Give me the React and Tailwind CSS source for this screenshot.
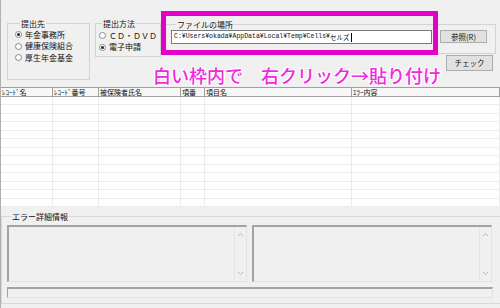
import React from "react";

function Radio({ checked, label }) {
  return (
    <div className="flex items-center h-[11.5px] gap-[3px]">
      <span className="w-[7px] h-[7px] rounded-full border border-[#8a8a8a] bg-white flex items-center justify-center shrink-0">
        {checked && <span className="w-[3px] h-[3px] rounded-full bg-[#222]" />}
      </span>
      <span className="whitespace-nowrap">{label}</span>
    </div>
  );
}

function Chevron({ up }) {
  return (
    <svg width="7" height="5" viewBox="0 0 7 5" className="block">
      <path
        d={up ? "M1 4 L3.5 1.5 L6 4" : "M1 1 L3.5 3.5 L6 1"}
        fill="none"
        stroke="#b8b8b8"
        strokeWidth="1"
      />
    </svg>
  );
}

function TextArea() {
  return (
    <div className="w-[240px] h-[57px] bg-[#f0f0f0] border-t-2 border-l-2 border-[#a3a3a3] border-r border-b border-r-[#e2e2e2] border-b-[#e2e2e2] flex justify-end">
      <div className="w-[12px] h-full border-l border-[#e6e6e6] flex flex-col items-center justify-between py-[5px]">
        <Chevron up />
        <Chevron />
      </div>
    </div>
  );
}

const cols = [
  { w: "w-[52px]", t: "ﾚｺｰﾄﾞ名" },
  { w: "w-[46px]", t: "ﾚｺｰﾄﾞ番号" },
  { w: "w-[82px]", t: "被保険者氏名" },
  { w: "w-[24px]", t: "項番" },
  { w: "w-[147px]", t: "項目名" },
  { w: "flex-1", t: "ｴﾗｰ内容" },
];

export default function App() {
  const rows = Array.from({ length: 13 });
  return (
    <div className="w-[500px] h-[308px] bg-[#f0f0f0] border-l border-[#b0b0b0] relative overflow-hidden text-[8px] leading-[10px] text-[#111] font-['Noto_Sans_CJK_JP','Noto_Sans',sans-serif]">
      {/* top controls */}
      <div className="flex items-start h-[87px] pl-[6px] pt-[19px]">
        <fieldset className="w-[83px] h-[61px] border border-[#d3d3d3] pl-[7px]">
          <legend className="ml-[5px] px-[1px] leading-[9px]">提出先</legend>
          <div className="flex flex-col pt-[1px]">
            <Radio checked label="年金事務所" />
            <Radio label="健康保険組合" />
            <Radio label="厚生年金基金" />
          </div>
        </fieldset>
        <fieldset className="ml-[5px] w-[66px] h-[38px] border border-[#d3d3d3] pl-[3px]">
          <legend className="ml-[3px] px-[1px] leading-[9px]">提出方法</legend>
          <div className="flex flex-col pt-[2px]">
            <Radio label="ＣＤ・ＤＶＤ" />
            <Radio checked label="電子申請" />
          </div>
        </fieldset>
        <div className="ml-[4px] mt-[1px] flex flex-col">
          <fieldset className="w-[331px] h-[34px] border border-[#d3d3d3] pl-[5px]">
            <legend className="ml-[5px] px-[1px] leading-[9px]">ファイルの場所</legend>
            <div className="flex items-start mt-[1px]">
              <div className="w-[261px] h-[14px] bg-white border border-[#7a7a7a] flex items-center pl-[2px] text-[6.5px] leading-[8px] font-['Liberation_Mono','Noto_Sans_CJK_JP',monospace] whitespace-nowrap">
                <span>C:¥Users¥okada¥AppData¥Local¥Temp¥Cells¥</span>
                <span className="font-['Noto_Sans_CJK_JP',sans-serif]">セルズ</span>
                <span className="w-[1px] h-[9px] bg-black ml-[1px]" />
              </div>
              <button className="ml-[8px] w-[47px] h-[13px] bg-[#e1e1e1] border border-[#adadad] text-[7.5px] leading-[11px] flex items-center justify-center">
                参照(R)
              </button>
            </div>
          </fieldset>
          <button className="ml-[281px] mt-[1px] w-[47px] h-[16px] bg-[#e1e1e1] border border-[#adadad] text-[7.5px] leading-[14px] flex items-center justify-center">
            チェック
          </button>
        </div>
      </div>

      {/* grid */}
      <div className="flex flex-col">
        <div className="flex h-[10px] bg-[#f7f7f7] border-t border-b border-[#a0a0a0] text-[7px] leading-[8px]">
          {cols.map((c, i) => (
            <div key={i} className={`${c.w} border-r border-[#a0a0a0] pl-[1px] whitespace-nowrap overflow-hidden`}>
              {c.t}
            </div>
          ))}
        </div>
        <div className="h-[110px] bg-white flex flex-col">
          {rows.map((_, r) => (
            <div key={r} className="flex-1 flex border-b border-[#ececec]">
              {cols.map((c, i) => (
                <div key={i} className={`${c.w} border-r border-[#ececec]`} />
              ))}
            </div>
          ))}
        </div>
      </div>

      {/* error details */}
      <fieldset className="mt-[5px] w-[510px] h-[92px] border border-[#d8d8d8] pl-[5px]">
        <legend className="ml-[4px] px-[1px] leading-[9px]">エラー詳細情報</legend>
        <div className="flex gap-[5px] mt-[4px]">
          <TextArea />
          <TextArea />
        </div>
        <div className="mt-[5px] w-[486px] h-[11px] bg-[#f0f0f0] border-t-2 border-l border-[#a3a3a3] border-r border-b border-r-[#e2e2e2] border-b-[#e2e2e2]" />
      </fieldset>

      {/* annotation overlay */}
      <div className="absolute left-[160px] top-[11px] w-[277px] h-[44px] border-[5px] border-[#e400c8] pointer-events-none" />
      <div className="absolute left-[152px] top-[66px] text-[18px] leading-[18px] font-medium text-[#f02adc] whitespace-nowrap [text-shadow:_0_0_2px_#fff,_1px_1px_0_#fff,_-1px_-1px_0_#fff,_1px_-1px_0_#fff,_-1px_1px_0_#fff]">
        白い枠内で　右クリック→貼り付け
      </div>
    </div>
  );
}
